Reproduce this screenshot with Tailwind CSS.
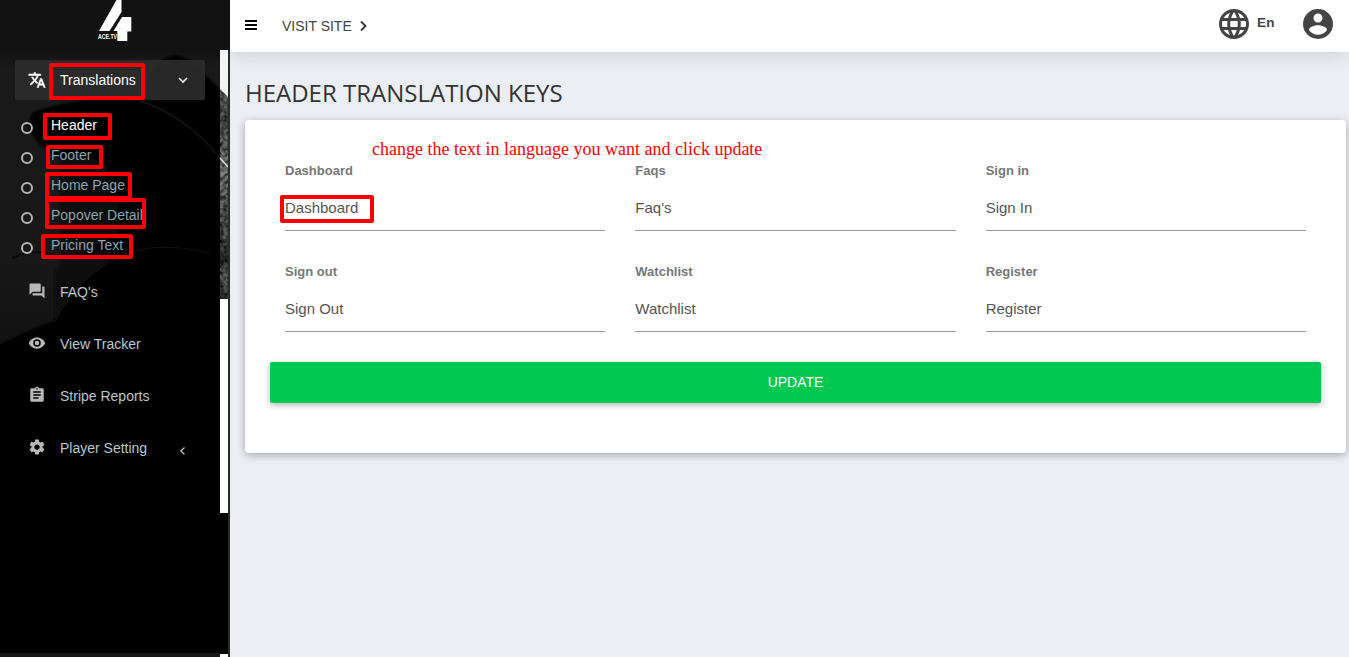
<!DOCTYPE html>
<html lang="en">
<head>
<meta charset="utf-8">
<title>Header Translation Keys</title>
<script src="https://cdn.jsdelivr.net/npm/@tailwindcss/browser@4"></script>
</head>
<body class="flex h-[657px] w-[1349px] overflow-hidden bg-[#ebeef3] font-['Liberation_Sans',Arial,sans-serif]">
<aside class="relative flex h-full w-[230px] shrink-0 flex-col bg-black">
  <!-- Sidebar backdrop -->
  <svg class="absolute left-0 top-[50px]" width="228" height="607" viewBox="0 50 228 607">
    <defs>
      <linearGradient id="left" x1="0" x2="0" y1="0" y2="1"><stop offset="0" stop-color="#121212"/><stop offset=".06" stop-color="#191919"/><stop offset=".7" stop-color="#181818"/><stop offset="1" stop-color="#101010"/></linearGradient>
      <linearGradient id="strip" x1="0" x2="0" y1="0" y2="1"><stop offset="0" stop-color="#777"/><stop offset=".3" stop-color="#555"/><stop offset=".45" stop-color="#888"/><stop offset=".65" stop-color="#666"/><stop offset=".75" stop-color="#555"/><stop offset=".85" stop-color="#303030"/><stop offset=".9" stop-color="#777"/><stop offset="1" stop-color="#333"/></linearGradient>
      <filter id="soft" x="-5%" y="-5%" width="110%" height="110%"><feGaussianBlur stdDeviation="1"/></filter>
      <filter id="grain" x="0" y="0" width="100%" height="100%"><feTurbulence type="fractalNoise" baseFrequency=".25" numOctaves="3" seed="4"/><feColorMatrix values="0 0 0 0 0  0 0 0 0 0  0 0 0 0 0  1.600 0 0 0 -.5"/></filter>
    </defs>
    <rect y="50" width="228" height="607" fill="#000"/>
    <rect y="50" width="220" height="300" fill="url(#left)"/>
    <g filter="url(#soft)">
      <path d="M34 112Q70 98 140 96Q150 66 165 58Q176 52 190 60L225 94V300H90Q60 240 72 180V165Q35 148 28 126Q29 116 34 112Z" fill="#060606"/>
      <path d="M60 158Q80 150 105 165L118 190V235Q90 245 60 270Z" fill="#0f0f0f"/>
      <path d="M55 270Q75 255 118 250L75 295L55 322Z" fill="#0e0e0e"/>
      <path d="M-5 347Q30 330 55 322Q75 280 120 256Q170 238 225 256V360H-5Z" fill="#060606"/>
      <path d="M-5 347Q50 318 110 303Q170 290 225 310V370H-5Z" fill="#030303"/>
    </g>
    <path d="M12 258Q25 252 42 252" fill="none" stroke="#0a0a0a" stroke-width="2"/>
    <path d="M140 101Q185 115 220 158" fill="none" stroke="#242424"/>
    <path d="M55 322Q75 280 120 256Q155 240 210 253" fill="none" stroke="#141414"/>
    <rect x="220" y="50" width="8" height="249" fill="url(#strip)"/>
    <rect x="220" y="50" width="8" height="249" filter="url(#grain)"/>
    <path d="M220 50h8v47l-8-8z" fill="#f4f4f4"/>
    <path d="M220 158l8 9" stroke="#ddd" stroke-width="1.500"/>
    <path d="M220 299h8v214h-8zM220 654h8v3h-8z" fill="#fff"/>
    <path d="M0 653h220v4h-220z" fill="#171717"/>
  </svg>
  <div class="absolute right-0 top-[50px] h-[607px] w-0.5 bg-[#222d32]"></div>
  <div class="relative flex h-[50px] shrink-0 justify-center bg-[#111]">
    <svg width="36" height="42" viewBox="97 0 36 42">
      <path d="M116.500 0H121.500V12L109.500 31H99ZM122 17H131.300V31.500H127.300V41H117.300V31H113.500Z" fill="#fff"/>
      <text x="98" y="38.500" textLength="19" lengthAdjust="spacingAndGlyphs" font-family="Liberation Sans" font-size="7" font-weight="700" fill="#fff">ACE.TV</text>
    </svg>
  </div>
  <nav class="relative flex flex-col text-[14px] text-[#b8c7ce]">
    <a class="ml-[15px] mt-[10px] mr-[25px] flex h-10 items-center rounded-xs bg-[#2c2c2c]/90 pl-[13px] text-white">
      <svg class="mb-px" width="18" height="18" viewBox="0 0 24 24" fill="currentColor" stroke="currentColor" stroke-width=".7"><path d="M12.870 15.070l-2.540-2.510.03-.03A17.500 17.500 0 0 0 14.070 6H17V4h-7V2H8v2H1v2h11.170C11.500 7.920 10.440 9.750 9 11.350 8.070 10.320 7.300 9.190 6.690 8h-2c.73 1.630 1.730 3.170 2.980 4.560l-5.090 5.020L4 19l5-5 3.110 3.110.76-2.040zM18.500 10h-2L12 22h2l1.120-3h4.750L21 22h2l-4.500-12zm-2.620 7l1.620-4.330L19.120 17h-3.240z"/></svg>
      <span class="ml-[14px] w-[117px]">Translations</span>
      <svg width="12" height="12" viewBox="0 0 12 12" fill="none" stroke="currentColor" stroke-width="1.600"><path d="M2 4l4 4 4-4"/></svg>
    </a>
    <div class="mt-[10px] flex flex-col pl-[21px]">
      <a class="flex h-[30px] items-center text-white"><i class="mt-[6px] size-3 rounded-full border-2 border-[#b4b4b4]"></i><span class="ml-[18px]">Header</span></a>
      <a class="flex h-[30px] items-center text-[#8aa4af]"><i class="mt-[6px] size-3 rounded-full border-2 border-[#b4b4b4]"></i><span class="ml-[18px]">Footer</span></a>
      <a class="flex h-[30px] items-center text-[#8aa4af]"><i class="mt-[6px] size-3 rounded-full border-2 border-[#b4b4b4]"></i><span class="ml-[18px]">Home Page</span></a>
      <a class="flex h-[30px] items-center text-[#8aa4af]"><i class="mt-[6px] size-3 rounded-full border-2 border-[#b4b4b4]"></i><span class="ml-[18px]">Popover Detail</span></a>
      <a class="flex h-[30px] items-center text-[#8aa4af]"><i class="mt-[6px] size-3 rounded-full border-2 border-[#b4b4b4]"></i><span class="ml-[18px]">Pricing Text</span></a>
    </div>
    <a class="mt-[6px] flex h-[52px] items-center pl-7">
      <svg class="mb-[2px]" width="18" height="18" viewBox="0 0 24 24" fill="#b8b8b8"><path d="M21 6h-2v9H6v2c0 .55.45 1 1 1h11l4 4V7c0-.55-.45-1-1-1zm-4 6V3c0-.55-.45-1-1-1H3c-.55 0-1 .45-1 1v14l4-4h10c.55 0 1-.45 1-1z"/></svg>
      <span class="ml-[14px]">FAQ's</span></a>
    <a class="flex h-[52px] items-center pl-7">
      <svg class="mb-[2px]" width="18" height="18" viewBox="0 0 24 24" fill="#b8b8b8"><path d="M12 4.500C7 4.500 2.730 7.610 1 12c1.730 4.390 6 7.500 11 7.500s9.270-3.110 11-7.500c-1.730-4.390-6-7.500-11-7.500zM12 17a5 5 0 1 1 0-10 5 5 0 0 1 0 10zm0-8a3 3 0 1 0 0 6 3 3 0 0 0 0-6z"/></svg>
      <span class="ml-[14px]">View Tracker</span></a>
    <a class="flex h-[52px] items-center pl-7">
      <svg class="mb-[2px]" width="18" height="18" viewBox="0 0 24 24" fill="#b8b8b8"><path d="M19 3h-4.180C14.400 1.840 13.300 1 12 1s-2.400.84-2.820 2H5c-1.100 0-2 .9-2 2v14c0 1.100.9 2 2 2h14c1.100 0 2-.9 2-2V5c0-1.100-.9-2-2-2zm-7 0a1 1 0 1 1 0 2 1 1 0 0 1 0-2zm2 14H7v-2h7v2zm3-4H7v-2h10v2zm0-4H7V7h10v2z"/></svg>
      <span class="ml-[14px]">Stripe Reports</span></a>
    <a class="flex h-[52px] items-center pl-7">
      <svg class="mb-[2px]" width="18" height="18" viewBox="0 0 24 24" fill="#b8b8b8"><path d="M19.430 12.980c.04-.32.07-.64.07-.98s-.03-.66-.07-.98l2.110-1.650c.19-.15.24-.42.12-.64l-2-3.460c-.12-.22-.39-.3-.61-.22l-2.490 1c-.52-.4-1.080-.73-1.690-.98l-.38-2.650A.49.49 0 0 0 14 2h-4c-.25 0-.46.18-.49.42l-.38 2.650c-.61.25-1.170.59-1.690.98l-2.490-1c-.23-.09-.49 0-.61.22l-2 3.460c-.13.22-.07.49.12.64l2.110 1.650c-.04.32-.07.65-.07.98s.03.66.07.98l-2.110 1.650c-.19.15-.24.42-.12.64l2 3.460c.12.22.39.3.61.22l2.490-1c.52.4 1.080.73 1.690.98l.38 2.650c.03.24.24.42.49.42h4c.25 0 .46-.18.49-.42l.38-2.650c.61-.25 1.170-.59 1.690-.98l2.490 1c.23.09.49 0 .61-.22l2-3.460c.12-.22.07-.49-.12-.64l-2.110-1.650zM12 15.500a3.500 3.500 0 1 1 0-7 3.500 3.500 0 0 1 0 7z"/></svg>
      <span class="ml-[14px] w-[116px]">Player Setting</span>
      <svg class="mt-[6px]" width="12" height="12" viewBox="0 0 12 12" fill="none" stroke="currentColor" stroke-width="1.200"><path d="M8.500 2.500L4.800 6 8.500 9.500"/></svg></a>
  </nav>
  <div class="absolute left-[49px] top-[63px] h-[37px] w-24 rounded-xs border-4 border-[#f00]"></div>
  <div class="absolute left-[43px] top-[113px] h-[27px] w-[69px] rounded-xs border-4 border-[#f00]"></div>
  <div class="absolute left-[46px] top-[145px] h-6 w-[57px] rounded-xs border-4 border-[#f00]"></div>
  <div class="absolute left-[45px] top-[172px] h-[28px] w-[87px] rounded-xs border-4 border-[#f00]"></div>
  <div class="absolute left-[45px] top-[198px] h-[31px] w-[101px] rounded-xs border-4 border-[#f00]"></div>
  <div class="absolute left-[41px] top-[234px] h-[25px] w-[92px] rounded-xs border-4 border-[#f00]"></div>
</aside>
<div class="flex min-w-0 flex-1 flex-col">
  <header class="flex h-[52px] shrink-0 items-center bg-white text-[#444] shadow-[0_2px_20px_rgba(0,0,0,0.14)]">
    <svg class="mb-[2px] ml-[15px]" width="12" height="10" viewBox="0 0 12 10"><path d="M0 0h12v2H0zM0 4h12v2H0zM0 8h12v2H0z" fill="#000"/></svg>
    <span class="ml-[25px] text-[14px]">VISIT SITE</span>
    <svg class="ml-[7px]" width="10" height="12" viewBox="0 0 10 12" fill="none" stroke="#333" stroke-width="1.800"><path d="M2 1.500L6.500 6 2 10.500"/></svg>
    <svg class="mb-1 ml-auto" width="36" height="36" viewBox="0 0 24 24" fill="#444"><path d="M11.990 2C6.470 2 2 6.480 2 12s4.470 10 9.990 10C17.520 22 22 17.520 22 12S17.520 2 11.990 2zm6.930 6h-2.950a15.650 15.650 0 0 0-1.380-3.560A8.030 8.030 0 0 1 18.920 8zM12 4.040c.83 1.200 1.480 2.530 1.910 3.960h-3.820c.43-1.430 1.080-2.760 1.910-3.960zM4.260 14C4.100 13.360 4 12.690 4 12s.1-1.360.26-2h3.380c-.08.66-.14 1.320-.14 2s.06 1.340.14 2H4.260zm.82 2h2.950c.32 1.250.78 2.450 1.380 3.560A7.990 7.990 0 0 1 5.080 16zm2.950-8H5.080a7.990 7.990 0 0 1 4.330-3.560A15.650 15.650 0 0 0 8.030 8zM12 19.960c-.83-1.200-1.480-2.530-1.910-3.960h3.820c-.43 1.430-1.080 2.760-1.910 3.960zM14.340 14H9.660c-.09-.66-.16-1.320-.16-2s.07-1.350.16-2h4.680c.09.65.16 1.320.16 2s-.07 1.340-.16 2zm.25 5.560c.6-1.110 1.060-2.310 1.380-3.560h2.950a8.030 8.030 0 0 1-4.330 3.560zM16.360 14c.08-.66.14-1.320.14-2s-.06-1.340-.14-2h3.380c.16.64.26 1.310.26 2s-.1 1.360-.26 2h-3.380z"/></svg>
    <span class="mb-[6px] ml-[5px] text-[13.500px] font-bold tracking-[.4px]">En</span>
    <svg class="mb-1 ml-[25px] mr-[13px]" width="36" height="36" viewBox="0 0 24 24" fill="#444"><path d="M12 2a10 10 0 1 0 0 20 10 10 0 0 0 0-20zm0 3a3 3 0 1 1 0 6 3 3 0 0 1 0-6zm0 14.200a7.200 7.200 0 0 1-6-3.220c.03-1.990 4-3.080 6-3.080s5.970 1.090 6 3.080a7.200 7.200 0 0 1-6 3.220z"/></svg>
  </header>
  <main class="flex flex-col pl-[15px] pr-[3px]">
    <h1 class="mt-[24px] h-[44px] whitespace-nowrap font-['Open_Sans',sans-serif] text-[24px] font-normal leading-[33px] text-[#333]">HEADER TRANSLATION KEYS</h1>
    <section class="relative flex h-[333px] flex-col rounded bg-white px-[25px] pt-[41px] shadow-[0_2px_8px_rgba(0,0,0,0.3)]">
      <div class="grid grid-cols-3 gap-x-[30px] px-[15px] text-[#555]">
        <div class="flex h-[101px] flex-col"><label class="text-[13px] font-bold leading-5 text-[#777]">Dashboard</label><div class="mt-[9px] h-[41px] border-b border-[#999] text-[15px] leading-[36px]">Dashboard</div></div>
        <div class="flex h-[101px] flex-col"><label class="text-[13px] font-bold leading-5 text-[#777]">Faqs</label><div class="mt-[9px] h-[41px] border-b border-[#999] text-[15px] leading-[36px]">Faq's</div></div>
        <div class="flex h-[101px] flex-col"><label class="text-[13px] font-bold leading-5 text-[#777]">Sign in</label><div class="mt-[9px] h-[41px] border-b border-[#999] text-[15px] leading-[36px]">Sign In</div></div>
        <div class="flex h-[101px] flex-col"><label class="text-[13px] font-bold leading-5 text-[#777]">Sign out</label><div class="mt-[9px] h-[41px] border-b border-[#999] text-[15px] leading-[36px]">Sign Out</div></div>
        <div class="flex h-[101px] flex-col"><label class="text-[13px] font-bold leading-5 text-[#777]">Watchlist</label><div class="mt-[9px] h-[41px] border-b border-[#999] text-[15px] leading-[36px]">Watchlist</div></div>
        <div class="flex h-[101px] flex-col"><label class="text-[13px] font-bold leading-5 text-[#777]">Register</label><div class="mt-[9px] h-[41px] border-b border-[#999] text-[15px] leading-[36px]">Register</div></div>
      </div>
      <button class="-mt-px h-[41px] w-full rounded-xs bg-[#00c851] text-[14px] text-white shadow-[0_2px_6px_rgba(0,0,0,0.3)]">UPDATE</button>
      <div class="absolute left-[35px] top-[75px] h-[28px] w-[94px] rounded-xs border-4 border-[#f00]"></div>
      <div class="absolute left-[127px] top-[17px] whitespace-nowrap font-['Liberation_Serif',serif] text-[18px] leading-6 text-[#f00]">change the text in language you want and click update</div>
    </section>
  </main>
</div>
</body>
</html>
